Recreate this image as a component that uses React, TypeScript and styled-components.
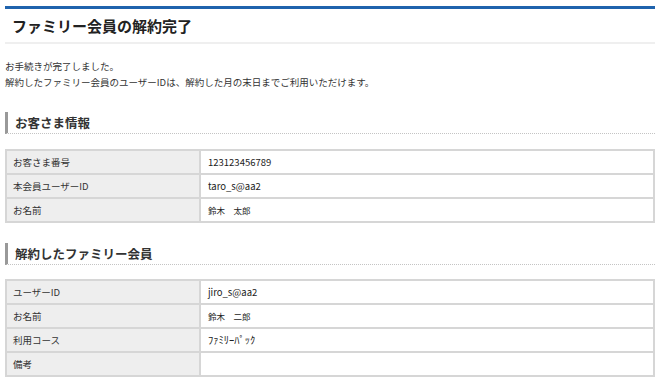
import React, {FC} from 'react'
import styled, {createGlobalStyle} from 'styled-components'

const GlobalStyle = createGlobalStyle`
  body {
    margin: 0;
    background: #fff;
    color: #333;
    font-family: "Noto Sans CJK JP", "Noto Sans", sans-serif;
  }
`

const Page = styled.div`
  padding: 6px 5px 0;
  width: 650px;
`

const PageHeader = styled.div`
  border-top: 3px solid #1f63ad;
  border-bottom: 2px solid #efefef;
  height: 33px;
  display: flex;
  align-items: center;
  padding-left: 7px;
`

const PageTitle = styled.h1`
  margin: 0;
  font-size: 15px;
  font-weight: bold;
  color: #222;
`

const Intro = styled.div`
  margin-top: 14px;
  font-size: 9.5px;
  line-height: 16px;
  color: #333;
`

const SectionTitle = styled.h2<{gap: number}>`
  margin: ${p => p.gap}px 0 0;
  height: 21px;
  display: flex;
  align-items: center;
  border-left: 3px solid #999;
  border-bottom: 1px dotted #c4c4c4;
  padding-left: 7px;
  font-size: 12.5px;
  font-weight: 600;
  color: #333;
`

const Table = styled.table<{gap: number}>`
  margin-top: ${p => p.gap}px;
  width: 100%;
  border-collapse: collapse;
  border: 2px solid #d6d6d6;
`

const Row = styled.tr`
  height: 24px;
`

const Label = styled.th`
  width: 180px;
  padding: 0 6px;
  background: #eeeeee;
  border: 2px solid #d6d6d6;
  text-align: left;
  font-weight: normal;
  font-size: 9.5px;
  line-height: 12px;
  color: #333;
`

const Value = styled.td<{size: number}>`
  padding: 0 7px;
  border: 2px solid #d6d6d6;
  font-size: ${p => p.size}px;
  line-height: 12px;
  color: #222;
`

type RowData = {label: string; value: string; size?: number}

const InfoTable: FC<{rows: RowData[]; gap: number}> = ({rows, gap}) => (
  <Table gap={gap}>
    <tbody>
      {rows.map((r, i) => (
        <Row key={i}>
          <Label>{r.label}</Label>
          <Value size={r.size ?? 9.5}>{r.value}</Value>
        </Row>
      ))}
    </tbody>
  </Table>
)

const customer: RowData[] = [
  {label: 'お客さま番号', value: '123123456789'},
  {label: '本会員ユーザーID', value: 'taro_s@aa2'},
  {label: 'お名前', value: '鈴木　太郎', size: 8.5},
]

const member: RowData[] = [
  {label: 'ユーザーID', value: 'jiro_s@aa2'},
  {label: 'お名前', value: '鈴木　二郎', size: 8.5},
  {label: '利用コース', value: 'ﾌｧﾐﾘｰﾊﾟｯｸ', size: 10.5},
  {label: '備考', value: ''},
]

const App: FC = () => (
  <>
    <GlobalStyle />
    <Page>
      <PageHeader>
        <PageTitle>ファミリー会員の解約完了</PageTitle>
      </PageHeader>
      <Intro>
        お手続きが完了しました。
        <br />
        解約したファミリー会員のユーザーIDは、解約した月の末日までご利用いただけます。
      </Intro>
      <SectionTitle gap={22}>お客さま情報</SectionTitle>
      <InfoTable rows={customer} gap={15} />
      <SectionTitle gap={20}>解約したファミリー会員</SectionTitle>
      <InfoTable rows={member} gap={14} />
    </Page>
  </>
)

export default App
